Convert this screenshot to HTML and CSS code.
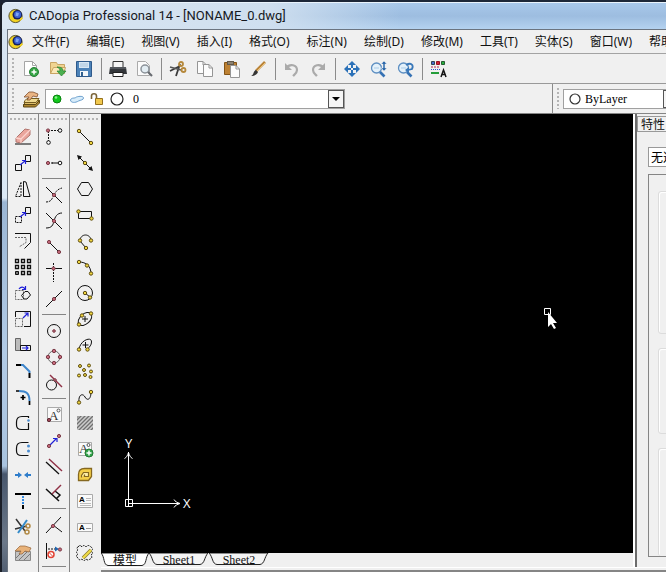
FILE: index.html
```html
<!DOCTYPE html>
<html lang="zh-CN">
<head>
<meta charset="utf-8">
<title>CADopia Professional 14 - [NONAME_0.dwg]</title>
<link rel="stylesheet" href="styles.css">
</head>
<body>
<svg class="defs" aria-hidden="true">
  <symbol id="logo" viewBox="0 0 16 16">
    <circle cx="7.500" cy="8" r="6.600" fill="#f3d321" stroke="#5a5634" stroke-width="1"/>
    <circle cx="9.300" cy="6.800" r="4.800" fill="#16205e"/>
    <circle cx="9.600" cy="6.600" r="3.500" fill="#3d63d4"/>
    <path d="M8 4.200l3 1-1 3-2.500-.5z" fill="#7fa5f2"/>
    <path d="M12 10.500l2-1.500 1 1.500-3 2.500z" fill="#f3d321"/>
  </symbol>
  <symbol id="magnifier" viewBox="0 0 26 26">
    <circle cx="10.500" cy="12" r="5" fill="#e4f1fa" stroke="#5d8fc2" stroke-width="1.300"/>
    <path d="M8 12h5" stroke="#a9cbe8"/>
    <path d="M14 16l4.500 4.500" stroke="#3672b4" stroke-width="2.600"/>
  </symbol>
  <symbol id="page" viewBox="0 0 10 13">
    <path d="M.5.5h5.500l3.500 3.500v8.500h-9z" fill="#fcfcfc" stroke="#959595"/>
    <path d="M6 .5v3.500h3.500" fill="none" stroke="#959595"/>
  </symbol>
</svg>
<div class="window">
  <header class="titlebar">
    <svg class="logo"><use href="#logo"/></svg>
    <h1>CADopia Professional 14 - [NONAME_0.dwg]</h1>
  </header>
  <div class="client">
    <nav class="menubar">
      <svg class="logo"><use href="#logo"/></svg>
      <button>文件(F)</button><button>编辑(E)</button><button>视图(V)</button><button>插入(I)</button><button>格式(O)</button><button>标注(N)</button><button>绘制(D)</button><button>修改(M)</button><button>工具(T)</button><button>实体(S)</button><button>窗口(W)</button><button>帮助</button>
    </nav>

    <div class="toolbar">
      <span class="grip"></span>
      <button aria-label="新建"><svg viewBox="0 0 26 26"><path d="M6.500 5.500h8l4 4v10h-12z" fill="#fff" stroke="#a5a5a5"/><path d="M14.500 5.500v4h4" fill="none" stroke="#a5a5a5"/><circle cx="16" cy="16" r="4.500" fill="#35a545" stroke="#278236"/><path d="M13.500 16h5M16 13.500v5" stroke="#fff" stroke-width="1.500"/></svg></button>
      <button aria-label="打开"><svg viewBox="0 0 26 26"><path d="M5.500 17.500v-11h6l1 2h7v9z" fill="#f0d491" stroke="#c9a563"/><path d="M5.500 17.500l3-6h12l-2 6z" fill="#fbe9b8" stroke="#c9a563"/><path d="M12 11c4 0 6 1 6 4h3l-4.500 5-4.500-5h3c0-2-1-3-3-4z" fill="#4bb050" stroke="#258130" stroke-width=".7"/></svg></button>
      <button aria-label="保存"><svg viewBox="0 0 26 26"><path d="M4.500 5.500h15v15h-15z" fill="#4c82b8" stroke="#2f5a8b"/><path d="M7 6h10v6H7z" fill="#d8e8f5"/><path d="M8 8h8M8 10h8" stroke="#a9c4dc"/><path d="M8 15h8v5H8z" fill="#f4f7fa"/><path d="M9 16h2v4H9z" fill="#31618f"/></svg></button>
      <span class="sep"></span>
      <button aria-label="打印"><svg viewBox="0 0 26 26"><path d="M8 5.500h10v6H8z" fill="#f5f5f5" stroke="#333"/><path d="M5 11h16l1 7H4z" fill="#33363a"/><path d="M5 12h16" stroke="#73777c"/><path d="M8 16.500h10v4H8z" fill="#fff" stroke="#202020"/></svg></button>
      <button aria-label="打印预览"><svg viewBox="0 0 26 26"><path d="M5.500 5.500h8l4 4v10h-12z" fill="#fbfbfb" stroke="#aaa"/><circle cx="13" cy="13" r="4" fill="#e3edf3" stroke="#8b9299" stroke-width="1.500"/><path d="M16 16l4 4" stroke="#676b70" stroke-width="2.200"/></svg></button>
      <span class="sep"></span>
      <button aria-label="剪切"><svg viewBox="0 0 26 26"><path d="M5 15l10-5M11 20l4-12" stroke="#3b3b3b" stroke-width="1.800"/><path d="M5 11l11 3" stroke="#555" stroke-width="1.500"/><circle cx="16" cy="8" r="2" fill="none" stroke="#b6893c" stroke-width="1.800"/><circle cx="18.500" cy="14" r="2" fill="none" stroke="#b6893c" stroke-width="1.800"/></svg></button>
      <button aria-label="复制"><svg viewBox="0 0 26 26"><use href="#page" x="5" y="5" width="10" height="13"/><use href="#page" x="11" y="8" width="10" height="13"/></svg></button>
      <button aria-label="粘贴"><svg viewBox="0 0 26 26"><path d="M5.500 6.500h12v12h-12z" fill="#bd8133" stroke="#835417"/><path d="M8 5h7v4H8z" fill="#62594a"/><path d="M9 7h5" stroke="#b7ac98"/><use href="#page" x="11" y="9" width="10" height="13"/></svg></button>
      <button aria-label="特性刷"><svg viewBox="0 0 26 26"><path d="M10 15l9-9" stroke="#b98338" stroke-width="2.600"/><path d="M11 15l8-8" stroke="#eec57b"/><path d="M5 20c3-1 2-5 5-6l2 2c-1 3-4 4-7 4z" fill="#353535"/></svg></button>
      <span class="sep"></span>
      <button aria-label="撤销" disabled><svg viewBox="0 0 26 26"><path d="M7 12c4-5 11-3 11 2 0 3-2 4-4 6" fill="none" stroke="#aaa" stroke-width="2.200"/><path d="M6 7v7h7z" fill="#aaa"/></svg></button>
      <button aria-label="重做" disabled><svg viewBox="0 0 26 26"><path d="M18 12c-4-5-11-3-11 2 0 3 2 4 4 6" fill="none" stroke="#aaa" stroke-width="2.200"/><path d="M19 7v7h-7z" fill="#aaa"/></svg></button>
      <span class="sep"></span>
      <button aria-label="平移"><svg viewBox="0 0 26 26" fill="#2b71b8"><path d="M13 5l4 4h-3v3h-2V9H9zM13 21l-4-4h3v-3h2v3h3zM5 13l4-4v3h3v2H9v3zM21 13l-4 4v-3h-3v-2h3V9z"/></svg></button>
      <button aria-label="动态缩放"><svg viewBox="0 0 26 26"><use href="#magnifier"/><path d="M18 5l3 3h-2v4h2l-3 3-3-3h2V8h-2z" fill="#2d69ab" stroke="#f0f0f0" stroke-width=".5"/></svg></button>
      <button aria-label="上一缩放"><svg viewBox="0 0 26 26"><use href="#magnifier"/><path d="M13 9c5-3 8 0 6 4l-4 1" fill="none" stroke="#3978b9" stroke-width="1.800"/><path d="M16 11v6l-4-3z" fill="#3978b9"/></svg></button>
      <span class="sep"></span>
      <button aria-label="特性"><svg viewBox="0 0 26 26"><path d="M5.500 5.500h3v3h-3z" fill="#4a6ad0" stroke="#345"/><path d="M10.500 5.500h3v3h-3z" fill="#d51e35" stroke="#912"/><path d="M15.500 5.500h3v3h-3z" fill="#26b13e" stroke="#275a31"/><path d="M5 11h9" stroke="#b42454" stroke-dasharray="2 1"/><path d="M5 13.500h9" stroke="#3355cd" stroke-dasharray="1 1"/><path d="M5 17h8" stroke="#249d3a" stroke-width="2"/><path d="M15 21l2.500-7 2.500 7M16 18.500h3" fill="none" stroke="#151515" stroke-width="1.500"/></svg></button>
    </div>

    <div class="optionbar">
      <section class="layers">
        <span class="grip"></span>
        <button aria-label="图层管理器"><svg viewBox="0 0 26 26"><path d="M5.500 18.500l4-4h12l-4 4z" fill="#dfbf69" stroke="#735b21"/><path d="M5.500 18.500h12l4-4v2.500l-4 4h-12z" fill="#ad862f" stroke="#5d4715"/><path d="M7 14.500l2-2h12l-3 4H6z" fill="#efd98f" stroke="#735b21"/><path d="M6 11l5-5h4l5 2-1 3-4-1-3 4H9l2-3z" fill="#e9b483" stroke="#825030" stroke-width=".8"/></svg></button>
        <div class="combo layer-combo">
          <svg class="state" viewBox="0 0 16 16"><circle cx="8" cy="8" r="4" fill="#12c71c" stroke="#08830f"/><circle cx="7" cy="6.500" r="1.300" fill="#8bf08d"/></svg>
          <svg class="state" viewBox="0 0 16 16"><path d="M1.500 9c1-3 4-1 6-3 3-1 7-1 7 1s-3 2-5 3c-3 2-8 2-8-1z" fill="#d8edfb" stroke="#6b9fcd"/></svg>
          <svg class="state" viewBox="0 0 16 16"><path d="M2.500 8V5c0-3 5-3 5 0v4" fill="none" stroke="#7a6338" stroke-width="1.600"/><path d="M6.500 7.500h7v6h-7z" fill="#f1c84e" stroke="#95701d"/></svg>
          <svg class="state" viewBox="0 0 16 16"><circle cx="8" cy="8" r="6" fill="#fff" stroke="#222" stroke-width="1.200"/></svg>
          <select aria-label="当前图层"><option>0</option></select>
          <span class="arrow"></span>
        </div>
      </section>
      <section class="colors">
        <span class="grip"></span>
        <div class="combo color-combo">
          <svg class="state" viewBox="0 0 16 16"><circle cx="8" cy="8" r="5" fill="#fff" stroke="#333" stroke-width="1.200"/></svg>
          <select aria-label="线条颜色"><option>ByLayer</option></select>
          <span class="arrow"></span>
        </div>
      </section>
    </div>

    <div class="workspace">
      <div class="toolcol">
        <span class="grip-h"></span>
        <button aria-label="删除"><svg viewBox="0 0 26 26"><path d="M5 20h16" stroke="#555" stroke-width="1.500"/><path d="M6 14l9-9 5 1v5l-9 8-5-1z" fill="#eaa59c" stroke="#b0756e"/><path d="M6 14l5 1 9-9M11 15v4" fill="none" stroke="#fbd3cd" stroke-width="1.300"/></svg></button>
        <button aria-label="移动"><svg class="l" viewBox="0 0 26 26"><path d="M15.500 5.500h5v6h-5zM5.500 14.500h6v6h-6z"/><path class="b" d="M10 15l5-4M12 10.500h3.500V14"/></svg></button>
        <button aria-label="镜像"><svg class="l" viewBox="0 0 26 26"><path d="M13.500 5.500v15h6.500L16 6z"/><path class="d" d="M11 6.500l-5.500 14H11z"/></svg></button>
        <button aria-label="复制实体"><svg class="l" viewBox="0 0 26 26"><path d="M15.500 5.500h5v6h-5z"/><path class="d" d="M5.500 14.500h6v6h-6z"/><path class="b" d="M10 15l5-4M12 10.500h3.500V14"/></svg></button>
        <button aria-label="偏移"><svg class="l" viewBox="0 0 26 26"><path d="M5 5.500h15.500v9l-6 6"/><path class="d g" d="M5 9.500h11v5L9 19"/></svg></button>
        <button aria-label="阵列"><svg class="l" viewBox="0 0 26 26"><path d="M5.500 5.500h3v3h-3zM11.500 5.500h3v3h-3zM17.500 5.500h3v3h-3zM5.500 11.500h3v3h-3zM11.500 11.500h3v3h-3zM17.500 11.500h3v3h-3zM11.500 17.500h3v3h-3zM17.500 17.500h3v3h-3z" stroke-width="1.300"/><path d="M5.500 17.500h3v3h-3z" fill="#777"/></svg></button>
        <button aria-label="旋转"><svg class="l" viewBox="0 0 26 26"><path class="d g" d="M5.500 10.500h8v9h-8z"/><path d="M11.500 15.500l3.500-4h3l2.500 3.500-3.500 4h-3z"/><path class="b" d="M9 9c2-3 5-2 6 0M15.500 6v3.500H12"/></svg></button>
        <button aria-label="缩放"><svg class="l" viewBox="0 0 26 26"><path d="M5.500 11V5.500h15v15H14"/><path class="d g" d="M5.500 12.500h7v8h-7z"/><path class="b" d="M13 12l5-5M14.500 7H18v3.500"/></svg></button>
        <button aria-label="拉伸"><svg class="l" viewBox="0 0 26 26"><path d="M5.500 6.500h5v12h-5z" fill="#bbb" stroke="#666"/><path d="M10.500 13.500h10v5h-10z"/><path class="b" d="M12 16h6M16 14l2 2-2 2"/></svg></button>
        <button aria-label="倒角"><svg viewBox="0 0 26 26"><path d="M6 7h5M19.500 15v5" stroke="#000" stroke-width="2"/><path d="M11 7h2l6.500 6.500V15" stroke="#3e86cc" stroke-width="2" fill="none"/></svg></button>
        <button aria-label="圆角"><svg viewBox="0 0 26 26"><path d="M6 7h3M19.500 17v4M13 11v5M10.500 13.500h5" stroke="#000" stroke-width="1.700"/><path d="M9 7c7 0 10.500 2 10.500 10" stroke="#3e86cc" stroke-width="2" fill="none"/></svg></button>
        <button aria-label="闭合"><svg class="l" viewBox="0 0 26 26"><path d="M18.500 8V6.500H12Q6.500 6.500 6.500 12v3q0 4.500 5 4.500h7V13" stroke-width="1.200"/><circle cx="18.500" cy="10.500" r="1.300" fill="#4c8dd0" stroke="none"/></svg></button>
        <button aria-label="打断"><svg class="l" viewBox="0 0 26 26"><path d="M18.500 6.500H12Q6.500 6.500 6.500 12v3q0 4.500 5 4.500h7" stroke-width="1.200"/><circle cx="18.500" cy="10" r="1.500" fill="#4c8dd0" stroke="none"/><circle cx="18.500" cy="15" r="1.500" fill="#4c8dd0" stroke="none"/></svg></button>
        <button aria-label="合并"><svg viewBox="0 0 26 26"><path d="M5 13h5M21 13h-5" stroke="#2e7dcb" stroke-width="2"/><path d="M8 10l4 3-4 3zM18 10l-4 3 4 3z" fill="#2e7dcb"/></svg></button>
        <button aria-label="延伸"><svg viewBox="0 0 26 26"><path d="M5 6h16" stroke="#000" stroke-width="2"/><path d="M13 8v8" stroke="#348ae0" stroke-width="2" stroke-dasharray="2 1"/><path d="M13 17v4" stroke="#000" stroke-width="2"/></svg></button>
        <button aria-label="修剪"><svg viewBox="0 0 26 26"><path d="M6 5l9 12M5 15l12-3" stroke="#333" stroke-width="1.500"/><path d="M17 6l-9 13" stroke="#358bc9" stroke-width="2"/><circle cx="18" cy="12" r="2" fill="none" stroke="#b28a45" stroke-width="1.500"/><circle cx="17" cy="18" r="2" fill="none" stroke="#b28a45" stroke-width="1.500"/></svg></button>
        <button aria-label="分解"><svg viewBox="0 0 26 26"><path d="M5.500 11.500h15v9h-15z" fill="#c4c4c4" stroke="#888"/><path d="M6 18l6-6M9 20l8-8M14 20l6-6" stroke="#777"/><path d="M5 11l5-5h5l6 2-2 4-4-1-3 3H9l2-3z" fill="#e8b279" stroke="#946137" stroke-width=".7"/></svg></button>
        <button aria-label="编辑"><svg class="l" viewBox="0 0 26 26"><path class="g" d="M6.500 6.500h14v13h-14z"/></svg></button>
      </div>

      <div class="toolcol">
        <span class="grip-h"></span>
        <button aria-label="端点"><svg class="l" viewBox="0 0 26 26"><path class="d" d="M7 6.500h12M7.500 7v12"/><circle class="p" cx="7" cy="6.500" r="1.600"/><circle class="w" cx="19" cy="6.500" r="1.800"/><circle class="w" cx="7.500" cy="18.500" r="1.800"/></svg></button>
        <button aria-label="中点"><svg class="l" viewBox="0 0 26 26"><path d="M11 13h8"/><path class="d" d="M7 13h5"/><circle class="p" cx="7" cy="13" r="1.600"/><circle class="w" cx="19" cy="13" r="1.800"/></svg></button>
        <span class="sep-h"></span>
        <button aria-label="交点"><svg class="l" viewBox="0 0 26 26"><path d="M5 5l16 16"/><path class="d" d="M5 20c6 0 6-4 8-7 2-4 4-6 8-7"/><circle class="p" cx="13" cy="13" r="1.600"/></svg></button>
        <button aria-label="外观交点"><svg class="l" viewBox="0 0 26 26"><path d="M5 5l16 16M5 20c6 0 7-3 8-7s3-8 8-8"/><circle class="p" cx="13" cy="13" r="1.600"/></svg></button>
        <button aria-label="线段"><svg class="l" viewBox="0 0 26 26"><path d="M8 8l10 10"/><circle class="p" cx="8" cy="8" r="1.600"/><circle class="p" cx="18" cy="18" r="1.600"/></svg></button>
        <button aria-label="垂足"><svg class="l" viewBox="0 0 26 26"><path d="M5 8.500h16"/><path class="d" d="M12.500 3v19"/><circle class="p" cx="12.500" cy="8.500" r="1.600"/></svg></button>
        <button aria-label="最近点"><svg class="l" viewBox="0 0 26 26"><path d="M5 21L21 5"/><circle class="p" cx="13" cy="13" r="1.600"/></svg></button>
        <span class="sep-h"></span>
        <button aria-label="圆心"><svg class="l" viewBox="0 0 26 26"><circle cx="13" cy="13" r="6.500"/><circle class="p" cx="13" cy="13" r="1.300"/></svg></button>
        <button aria-label="象限点"><svg class="l" viewBox="0 0 26 26"><circle class="g" cx="13" cy="13" r="6"/><circle class="p" cx="13" cy="7" r="1.700"/><circle class="p" cx="13" cy="19" r="1.700"/><circle class="p" cx="7" cy="13" r="1.700"/><circle class="p" cx="19" cy="13" r="1.700"/></svg></button>
        <button aria-label="切点"><svg class="l" viewBox="0 0 26 26"><circle cx="10.500" cy="15" r="5"/><path class="m" d="M9 5l12 12"/><circle class="p" cx="14" cy="10" r="1.300"/></svg></button>
        <span class="sep-h"></span>
        <button aria-label="插入点"><svg viewBox="0 0 26 26"><path d="M6.500 5.500h14v14h-14z" fill="#fafafa" stroke="#aaa"/><text class="serif" x="8" y="18">A</text><circle cx="17.500" cy="8.500" r="1.500" fill="none" stroke="#555"/><circle cx="8" cy="18" r="1.600" fill="#a54d5e" stroke="#5e2630"/></svg></button>
        <button aria-label="捕捉自"><svg class="l" viewBox="0 0 26 26"><path class="b" d="M9 17l6-6M12 10.500h4V14"/><circle class="p" cx="8" cy="18" r="1.600"/><circle class="p" cx="18" cy="8" r="1.600"/></svg></button>
        <button aria-label="平行"><svg class="l" viewBox="0 0 26 26"><path d="M5 8l13 12" stroke-width="1.300"/><path class="m" d="M8 5l13 12"/></svg></button>
        <button aria-label="正交"><svg class="l" viewBox="0 0 26 26"><path d="M5 9l13 12M14 11l5 4-4 4" stroke-width="1.500"/><path class="m" d="M11 14l9-9"/></svg></button>
        <span class="sep-h"></span>
        <button aria-label="节点"><svg class="l" viewBox="0 0 26 26"><path d="M5 21L20 5M12 13l9 7"/><circle class="p" cx="12" cy="14" r="1.600"/></svg></button>
        <button aria-label="无捕捉"><svg class="l" viewBox="0 0 26 26"><path d="M5.500 5v16"/><path class="d" d="M7 11h8"/><path d="M14 8.500l4 2.500-4 2.500z" fill="#1e65af" stroke="none"/><circle class="p" cx="19" cy="11.500" r="1.600"/><circle cx="10" cy="16.500" r="3" fill="#fff" stroke="#e14335" stroke-width="1.500"/><path d="M8 14.500l4 4" stroke="#e14335"/></svg></button>
        <span class="sep-h"></span>
      </div>

      <div class="toolcol">
        <span class="grip-h"></span>
        <button aria-label="直线"><svg class="l" viewBox="0 0 26 26"><path d="M7 7l12 12"/><circle class="y" cx="7" cy="7" r="1.700"/><circle class="y" cx="19" cy="19" r="1.700"/></svg></button>
        <button aria-label="构造线"><svg class="l" viewBox="0 0 26 26"><path d="M6 6l14 14"/><path d="M5 5l5 1.500L6.500 10zM21 21l-5-1.500 3.500-3.500z" fill="#111" stroke="none"/><circle class="y" cx="13" cy="13" r="1.700"/></svg></button>
        <button aria-label="多边形"><svg class="l" viewBox="0 0 26 26"><path d="M9.500 6.500h7l4 6.500-4 6.500h-7L5.500 13z"/></svg></button>
        <button aria-label="矩形"><svg class="l" viewBox="0 0 26 26"><path d="M6.500 9.500h13v7h-13z"/><circle class="y" cx="6.500" cy="9.500" r="1.700"/><circle class="y" cx="19.500" cy="16.500" r="1.700"/></svg></button>
        <button aria-label="多段线"><svg class="l" viewBox="0 0 26 26"><path d="M19 13c0-8-11-8-11 0l6 7"/><circle class="y" cx="8" cy="12.500" r="1.700"/><circle class="y" cx="19" cy="12.500" r="1.700"/><circle class="y" cx="14" cy="20" r="1.700"/></svg></button>
        <button aria-label="圆弧"><svg class="l" viewBox="0 0 26 26"><path d="M7 8c7 0 12 4 12 12"/><circle class="y" cx="7" cy="8" r="1.700"/><circle class="y" cx="15" cy="11.500" r="1.700"/><circle class="y" cx="19" cy="19.500" r="1.700"/></svg></button>
        <button aria-label="圆"><svg class="l" viewBox="0 0 26 26"><circle cx="13" cy="13" r="7.500"/><path d="M13 13l5 4"/><circle class="y" cx="13" cy="13" r="1.700"/><circle class="y" cx="18" cy="17.500" r="1.700"/></svg></button>
        <button aria-label="椭圆"><svg class="l" viewBox="0 0 26 26"><ellipse cx="13" cy="13" rx="8" ry="5" transform="rotate(-42 13 13)"/><path d="M13 10v6M10 13h6"/><circle class="y" cx="7" cy="18.500" r="1.700"/><circle class="y" cx="19" cy="7.500" r="1.700"/><circle class="y" cx="10" cy="9.500" r="1.700"/></svg></button>
        <button aria-label="椭圆弧"><svg class="l" viewBox="0 0 26 26"><path d="M7 17.500C8 8 20 4 19.500 10c0 3-2 5-4 7"/><path d="M13.500 10v6M10.500 13h6"/><circle class="y" cx="7" cy="17.500" r="1.700"/><circle class="y" cx="15.500" cy="17.500" r="1.700"/></svg></button>
        <button aria-label="点"><svg class="l" viewBox="0 0 26 26"><circle class="y" cx="8" cy="8" r="1.500"/><circle class="y" cx="17" cy="7.500" r="1.500"/><circle class="y" cx="12" cy="12" r="1.500"/><circle class="y" cx="19" cy="13.500" r="1.500"/><circle class="y" cx="7" cy="17.500" r="1.500"/><circle class="y" cx="13" cy="17" r="1.500"/><circle class="y" cx="18.500" cy="19" r="1.500"/></svg></button>
        <button aria-label="样条曲线"><svg class="l" viewBox="0 0 26 26"><path d="M7 19c-1-9 4-10 6-6s6 3 6-5"/><circle class="y" cx="7" cy="18.500" r="1.700"/><circle class="y" cx="19" cy="8" r="1.700"/></svg></button>
        <button aria-label="图案填充"><svg viewBox="0 0 26 26"><path d="M5 6h16v14H5z" fill="#a2a2a2"/><path d="M5 10l4-4M5 14l8-8M5 18l12-12M7 20L21 6M11 20l10-10M15 20l6-6M19 20l2-2" stroke="#707070"/><path d="M5 12l6-6M5 16l10-10M5 20L19 6M9 20l12-12M13 20l8-8M17 20l4-4" stroke="#ccc"/></svg></button>
        <button aria-label="注释"><svg viewBox="0 0 26 26"><path d="M6.500 6.500h13v13h-13z" fill="#fafafa" stroke="#aaa"/><text class="serif" x="7" y="17">A</text><circle cx="16.500" cy="9" r="1.500" fill="none" stroke="#555"/><circle cx="17" cy="17" r="4" fill="#31a34a" stroke="#237b35"/><path d="M14.500 17h5M17 14.500v5" stroke="#fff" stroke-width="1.500"/></svg></button>
        <button aria-label="块"><svg viewBox="0 0 26 26"><path d="M6.500 18.500v-6c0-4 2-6 6-6h7v8l-3 4z" fill="#f5cf49" stroke="#856821" stroke-width="1.300"/><path d="M9.500 15.500v-2l2-3h5v4h-4v-2" fill="#fff0a9" stroke="#856821" stroke-width="1.200"/></svg></button>
        <button aria-label="多行文字"><svg viewBox="0 0 26 26"><path d="M5.500 6.500h15v13h-15z" fill="#fafafa" stroke="#aaa"/><text class="mini" x="7" y="14">A</text><path d="M14 10.500h5M14 12.500h5M8 15.500h11M8 17.500h11" stroke="#bbb"/></svg></button>
        <button aria-label="文字"><svg viewBox="0 0 26 26"><path d="M5.500 9.500h15v8h-15z" fill="#fafafa" stroke="#aaa"/><text class="mini" x="7" y="16">A</text><path d="M14 14.500h5" stroke="#999"/></svg></button>
        <button aria-label="修订云线"><svg class="l" viewBox="0 0 26 26"><path d="M6 7q2-3 4 0q2-3 4 0q2-3 5 0q3 2 0 4q3 2 0 4q2 3-1 4q-2 2-4 0q-2 3-4 0q-3 2-4-1q-3-2 0-4q-3-2 0-4q-2-2 0-3" stroke-dasharray="2 1"/><path d="M11 18l8-8" stroke="#8a7b2d" stroke-width="3.600"/><path d="M11 18l8-8" stroke="#f0dc46" stroke-width="2.200"/></svg></button>
        <button aria-label="更多"><svg class="l" viewBox="0 0 26 26"><path class="d" d="M6.500 6.500h14v13h-14z"/></svg></button>
      </div>

      <div class="main">
        <div class="upper">
          <main class="document">
            <div class="canvas">
              <svg class="ucs" viewBox="0 0 72 76" fill="none" stroke="#fff"><path d="M7.500 63.500V16M3.500 22.500c2-1 3-3 4-6 1 3 2 5 4 6M7 67.500h51M53 63.500c1 2 3 3 6 4-3 1-5 2-6 4M4.500 63.500h7v7h-7zM7.500 63v8"/><text x="4" y="12">Y</text><text x="62" y="72">X</text></svg>
              <svg class="cursor" viewBox="0 0 16 24"><path d="M1.500 1.500h6v6h-6z" fill="none" stroke="#fff"/><path d="M5 5v15l3-3 3 5 2-1-3-5h4z" fill="#fff"/></svg>
            </div>
            <div class="sheets">
              <button class="sheet active"><svg viewBox="0 0 48 14" preserveAspectRatio="none"><path d="M0 0c4 4 2 12 7 12.500h34c5-1 3-8 7-12.500z"/></svg><span>模型</span></button>
              <button class="sheet"><svg viewBox="0 0 60 14" preserveAspectRatio="none"><path d="M0 0c4 4 3 11 8 11.500h43c5-1 4-7 8-11.500z"/></svg><span>Sheet1</span></button>
              <button class="sheet"><svg viewBox="0 0 60 14" preserveAspectRatio="none"><path d="M0 0c4 4 3 11 8 11.500h43c5-1 4-7 8-11.500z"/></svg><span>Sheet2</span></button>
            </div>
          </main>
          <aside class="properties">
            <h2>特性</h2>
            <select aria-label="选择对象"><option>无选择</option></select>
            <div class="groups"><div class="group first"></div><div class="group second"></div><div class="group third"></div></div>
          </aside>
        </div>
        <div class="bottomline"></div>
      </div>
    </div>
  </div>
</div>
</body>
</html>
```

FILE: styles.css
```css
* { box-sizing: border-box; }
body {
  margin: 0;
  background: #1c2434;
  color: #111;
  font: 12px/16px "Liberation Sans", "Noto Sans CJK SC", sans-serif;
}
button {
  margin: 0;
  padding: 0;
  border: 0;
  background: none;
  color: inherit;
  font: inherit;
}
svg { display: block; }
.defs { position: absolute; width: 0; height: 0; }

.window {
  display: flex;
  flex-direction: column;
  height: 100vh;
  overflow: hidden;
  border-top: 2px solid #1d2738;
  border-left: 2px solid #1b1f28;
  border-top-left-radius: 7px;
  background: linear-gradient(#d4e2f0 0, #dbe8f5 196px, #9bb6d4 200px, #b2cbe6 350px, #a9c3df 464px, #48566c 472px, #6b7889 540px, #505d70 572px);
}
.titlebar {
  display: flex;
  align-items: center;
  flex: none;
  gap: 5px;
  height: 27px;
  padding-left: 6px;
  border-top: 1px solid #e9f3fc;
  border-top-left-radius: 6px;
  background: linear-gradient(90deg, #dbe7f3, #cfdfef 40%, transparent 60%), linear-gradient(#a8c8ea, #9dbde0 50%, #b4d2f0);
}
.titlebar h1 {
  margin: 0;
  color: #16191e;
  font: 13px/18px Roboto, "Noto Sans", sans-serif;
  white-space: nowrap;
}
.logo { flex: none; width: 16px; height: 16px; }
.client {
  display: flex;
  flex: 1;
  flex-direction: column;
  min-height: 0;
  margin-left: 5px;
  border: 1px solid #6b7480;
  border-width: 1px 0 0 1px;
  background: #f0f0f0;
}

.menubar {
  display: flex;
  align-items: center;
  flex: none;
  gap: 17px;
  height: 24px;
  overflow: hidden;
  border-bottom: 1px solid #a3a3a3;
  font: 12px/18px "Noto Sans", "Noto Sans CJK SC", sans-serif;
  white-space: nowrap;
}
.menubar .logo { margin-right: -9px; }
.menubar button { flex: none; }

.toolbar {
  display: flex;
  align-items: center;
  flex: none;
  height: 30px;
  border-bottom: 1px solid #999;
}
.toolbar button { width: 27px; height: 26px; }
.toolbar svg, .layers button svg, .toolcol svg { width: 26px; height: 26px; }
.grip {
  flex: none;
  align-self: stretch;
  width: 2px;
  margin: 4px;
  background: repeating-linear-gradient(#b4b4b4 0 2px, transparent 2px 4px);
}
.sep {
  width: 6px;
  height: 22px;
  background: linear-gradient(#8b8b8b, #8b8b8b) 2px 0 / 1px 100% no-repeat;
}

.optionbar {
  display: flex;
  flex: none;
  height: 30px;
  overflow: hidden;
  border-bottom: 1px solid #858585;
}
.layers, .colors { display: flex; align-items: center; }
.layers { flex: 1; border-right: 1px solid #8b8b8b; }
.layers button { width: 26px; margin-right: 1px; }
.colors { flex: none; width: 113px; overflow: hidden; }
.combo {
  display: flex;
  align-items: center;
  flex: none;
  height: 20px;
  padding-left: 3px;
  border: 1px solid #a0a0a0;
  background: #fff;
}
.layer-combo { width: 300px; }
.color-combo { width: 117px; }
.state { flex: none; width: 16px; height: 16px; margin-right: 4px; }
.color-combo .state { margin-right: 2px; }
select {
  appearance: none;
  min-width: 0;
  padding: 0;
  border: 0;
  background: none;
  color: #000;
}
.combo select { flex: 1; font: 12px/16px "Liberation Serif", serif; }
.layer-combo select { padding-left: 4px; }
.arrow {
  display: grid;
  place-items: center;
  flex: none;
  width: 16px;
  height: 18px;
  border: 1px solid #555;
  background: #f5f5f5;
  pointer-events: none;
}
.arrow::after {
  border: 4px solid transparent;
  border-top-color: #000;
  border-bottom: 0;
  content: "";
}

.workspace { display: flex; flex: 1; min-height: 0; }
.toolcol {
  flex: none;
  width: 31px;
  overflow: hidden;
  border-right: 1px solid #858585;
}
.toolcol:nth-child(3) { border-right-color: #f0f0f0; }
.toolcol button { display: block; width: 26px; height: 26px; margin: 0 2px; }
.grip-h {
  display: block;
  height: 2px;
  margin: 4px 2px;
  background: repeating-linear-gradient(90deg, #b4b4b4 0 2px, transparent 2px 4px);
}
.sep-h {
  display: block;
  height: 6px;
  margin: 0 3px;
  background: linear-gradient(#858585, #858585) 0 2px / 100% 1px no-repeat;
}
.l { fill: none; stroke: #111; }
.l .b { stroke: #2020d8; stroke-width: 1.2; }
.l .d { stroke-dasharray: 2 1; }
.l .g { stroke: #666; }
.l .m { stroke: #8f3045; stroke-width: 1.4; }
.l .p { fill: #c76a7b; stroke: #7a3a46; }
.l .w { fill: #fff; }
.l .y { fill: #f0d640; stroke: #5c4b10; }
.serif { fill: #333; font: 13px "Liberation Serif", serif; }
.mini { fill: #000; font: bold 8px "Liberation Sans", sans-serif; }

.main { display: flex; flex: 1; flex-direction: column; min-width: 0; }
.upper { display: flex; flex: 1; min-height: 0; }
.bottomline {
  flex: none;
  height: 5px;
  border-top: 1px solid #fff;
  border-bottom: 2px solid #858585;
}
.document {
  display: flex;
  flex: 1;
  flex-direction: column;
  min-width: 0;
  border-right: 2px solid #fff;
}
.canvas { position: relative; flex: 1; overflow: hidden; background: #000; }
.ucs { position: absolute; bottom: 41px; left: 20px; width: 72px; height: 76px; }
.ucs text { fill: #fff; stroke: none; font: 13px "Open Sans", sans-serif; }
.cursor { position: absolute; top: 193px; left: 442px; width: 16px; height: 24px; }
.sheets { display: flex; flex: none; height: 14px; }
.sheet {
  display: grid;
  width: 60px;
  height: 14px;
  font: 12px/14px "Liberation Serif", serif;
}
.sheet.active { width: 48px; font: 12px/14px "Noto Sans CJK SC", sans-serif; }
.sheet > * { grid-area: 1 / 1; }
.sheet svg { width: 100%; height: 14px; fill: #f4f4f4; stroke: #222; }
.sheet.active svg { fill: #fff; }

.properties {
  display: flex;
  flex: none;
  flex-direction: column;
  width: 31px;
  overflow: hidden;
  border-left: 2px solid #6c6c6c;
}
.properties h2 {
  flex: none;
  width: 40px;
  margin: 2px 0 15px;
  padding-left: 3px;
  border: 1px solid #999;
  font: 12px/14px "Noto Sans CJK SC", sans-serif;
  white-space: nowrap;
}
.properties select {
  flex: none;
  width: 90px;
  height: 20px;
  margin-left: 11px;
  padding-left: 2px;
  border: 1px solid #999;
  background: #fff;
  font: 12px/18px "Noto Sans CJK SC", sans-serif;
}
.groups {
  display: flex;
  flex: 1;
  flex-direction: column;
  gap: 14px;
  width: 90px;
  margin: 7px 0 10px 11px;
  padding: 16px 0 0 9px;
  border: 1px solid #858585;
}
.group { border: 1px solid #dcdcdc; border-radius: 3px; box-shadow: inset 1px 1px #fff; }
.first { flex: 143; }
.second { flex: 85; }
.third { flex: 109; border-bottom: 0; }
```
